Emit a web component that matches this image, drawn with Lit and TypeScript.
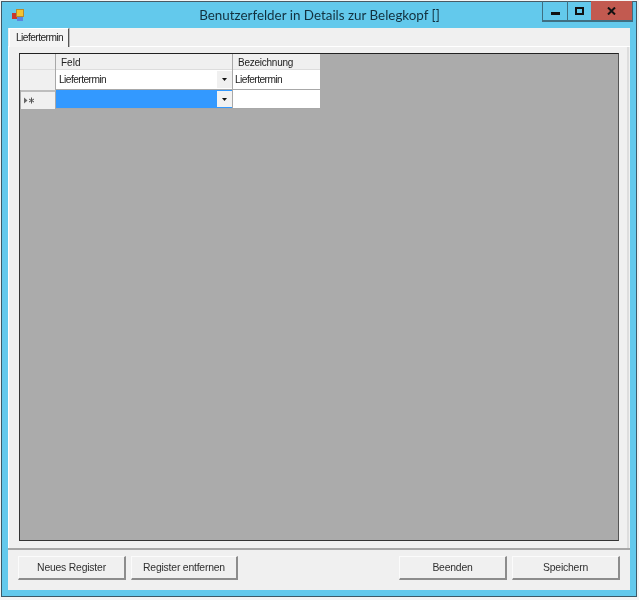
import { LitElement, html, css } from "lit";
import { customElement } from "lit/decorators.js";

@customElement("app-root")
export class AppRoot extends LitElement {
  static styles = css`
    :host { display: block; width: 639px; height: 600px; background: #f4f4f4; font-family: "Liberation Sans", Arial, sans-serif; color: #222; overflow: hidden; }
    * { box-sizing: border-box; }
    .win { margin: 1px 0 0 1px; width: 636px; height: 596px; background: #63c9ec; border: 1px solid #3c5a68; border-top-color: #4a5a64; display: flex; flex-direction: column; padding: 0 6px 6px 6px; filter: blur(0.3px); }
    .title { height: 26px; flex: none; display: flex; align-items: flex-start; position: relative; }
    .icon { width: 12px; height: 12px; margin: 7px 0 0 4px; flex: none; }
    .title-text { position: absolute; left: 0; right: 0; top: 4px; text-align: center; font: 13.4px/18px "Lato", sans-serif; color: #12303e; padding-left: 1px; }
    .ctrls { position: absolute; right: -3px; top: -1px; display: flex; height: 20px; border: 1px solid #3f6f82; border-top: none; box-shadow: 0 1px 0 #3f6f82; }
    .ctrl { display: flex; align-items: center; justify-content: center; height: 19px; }
    .ctrl svg { display: block; }
    .min { width: 25px; border-right: 1px solid #3f6f82; padding-top: 6px; }
    .max { width: 23px; }
    .close { width: 41px; background: #c25a50; }
    .client { flex: 1; min-height: 0; background: #f0f0f0; display: flex; flex-direction: column; }
    .tabstrip { height: 19px; flex: none; display: flex; align-items: flex-end; padding-left: 1px; background: #f0f0f0; border-bottom: 1px solid #ffffff; }
    .tab { width: 60px; height: 19px; background: #f4f4f4; border-right: 1px solid #555; border-left: 1px solid #fff; border-top: 1px solid #fff; font-size: 10.2px; letter-spacing: -0.55px; line-height: 17px; padding-left: 6px; box-shadow: 1px 0 0 #bbb; position: relative; top: 1px; }
    .page { flex: 1; min-height: 0; padding: 6px 8px 7px 10px; border-right: 2px solid #ddd; margin-right: 1px; border-left: 1px solid #fff; }
    .grid { width: 100%; height: 100%; background: #ababab; border: 1px solid #333; border-right-color: #555; border-top-color: #222; padding: 0; }
    .row { display: grid; grid-template-columns: 36px 177px 87px; width: 300px; }
    .head { height: 15px; background: #f0f0f0; font-size: 10px; line-height: 17px; }
    .head .c { border-right: 1px solid #a8a8a8; padding-left: 5px; }
    .head .c:last-child { border-right: none; padding-left: 5px; letter-spacing: -0.25px; }
    .body { height: 20px; font-size: 10.2px; line-height: 19px; border-top: 1px solid #ddd; }
    .hdr { background: #f0f0f0; border-right: 1px solid #a8a8a8; position: relative; font-size: 9px; color: #555; }
    .cell { background: #fff; border-right: 1px solid #a8a8a8; border-bottom: 1px solid #a8a8a8; display: flex; align-items: stretch; justify-content: space-between; padding-left: 3px; letter-spacing: -0.55px; }
    .cell.plain { border-right: none; padding-left: 2px; }
    .cell.sel { background: #3399ff; padding-left: 0; }
    .drop { width: 15px; margin: 1px 0 1px; background: #f0f0f0; display: flex; align-items: center; justify-content: center; flex: none; }
    .sel .drop { background: #f2f2f2; }
    .hdr.sep { border-top: 2px solid #bdbdbd; margin-left: 1px; }
    .mark { display: flex; align-items: center; height: 100%; padding-left: 3px; gap: 0; }
    .footer { flex: none; height: 42px; border-top: 2px solid #a6a6a6; display: flex; padding: 6px 10px 0 10px; gap: 5px; background: #f0f0f0; }
    .btn { height: 24px; background: #f0f0f0; border: 1px solid #fbfbfb; border-right: 2px solid #8c8c8c; border-bottom: 2px solid #8c8c8c; font-size: 10.4px; letter-spacing: -0.2px; display: flex; align-items: center; justify-content: center; color: #303030; }
    .w1 { width: 108px; }
    .w2 { width: 107px; }
    .grow { flex: 1; }
    .w3 { width: 108px; }
  `;

  render() {
    const tri = html`<svg width="5" height="3" viewBox="0 0 5 3"><path d="M0 0h5L2.500 3z" fill="#111"/></svg>`;
    return html`
      <div class="win">
        <div class="title">
          <svg class="icon" viewBox="0 0 12 12">
            <rect x="0" y="4" width="5" height="6" fill="#c8372f"/>
            <rect x="4.500" y="0.500" width="7" height="7" fill="#f4c430" stroke="#b98a2a"/>
            <rect x="5" y="8" width="6" height="4" fill="#5a86e0"/>
          </svg>
          <div class="title-text">Benutzerfelder in Details zur Belegkopf []</div>
          <div class="ctrls">
            <div class="ctrl min"><svg width="9" height="3"><rect width="9" height="3" fill="#111"/></svg></div>
            <div class="ctrl max"><svg width="9" height="8"><rect x="1" y="1" width="7" height="6" fill="none" stroke="#111" stroke-width="2"/></svg></div>
            <div class="ctrl close"><svg width="9" height="8" viewBox="0 0 9 8"><path d="M1 .5L8 7.500M8 .5L1 7.500" stroke="#111" stroke-width="2" fill="none"/></svg></div>
          </div>
        </div>
        <div class="client">
          <div class="tabstrip"><div class="tab">Liefertermin</div></div>
          <div class="page">
            <div class="grid">
              <div class="row head"><div class="c"></div><div class="c">Feld</div><div class="c">Bezeichnung</div></div>
              <div class="row body">
                <div class="hdr"></div>
                <div class="cell"><span>Liefertermin</span><span class="drop">${tri}</span></div>
                <div class="cell plain">Liefertermin</div>
              </div>
              <div class="row body">
                <div class="hdr sep"><div class="mark"><svg width="11" height="7" viewBox="0 0 11 7"><path d="M0 .5L3.500 3.500L0 6.500z" fill="#666"/><path d="M7.500 0.500v6M5 2l5 3M10 2l-5 3" stroke="#555" stroke-width="1"/></svg></div></div>
                <div class="cell sel"><span></span><span class="drop">${tri}</span></div>
                <div class="cell plain"></div>
              </div>
            </div>
          </div>
          <div class="footer">
            <div class="btn w1">Neues Register</div>
            <div class="btn w2">Register entfernen</div>
            <div class="grow"></div>
            <div class="btn w3">Beenden</div>
            <div class="btn w3">Speichern</div>
          </div>
        </div>
      </div>
    `;
  }
}
